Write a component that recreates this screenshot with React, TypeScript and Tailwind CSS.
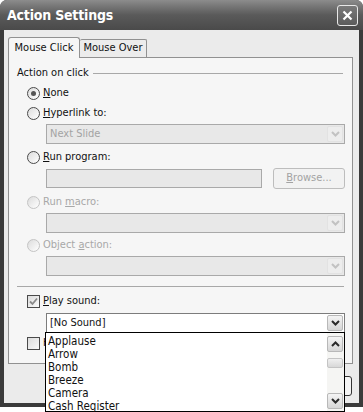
import React from 'react';

const FONT = '"DejaVu Sans Condensed", "DejaVu Sans", sans-serif';
const SOUNDS = ['Applause', 'Arrow', 'Bomb', 'Breeze', 'Camera', 'Cash Register'];

const Radio = ({ checked = false, disabled = false }: { checked?: boolean; disabled?: boolean }) => (
  <span
    className={`flex h-[13px] w-[13px] items-center justify-center rounded-full border bg-gradient-to-br from-[#dcdcdc] to-[#ffffff] ${
      disabled ? 'border-[#c4c4c4]' : 'border-[#4a4a4a]'
    }`}
  >
    {checked && <span className="h-[5px] w-[5px] rounded-full bg-[#555]" />}
  </span>
);

const Check = ({ checked = false }: { checked?: boolean }) => (
  <span className="flex h-[13px] w-[13px] items-center justify-center border border-[#4a4a4a] bg-gradient-to-br from-[#dcdcdc] to-[#fafafa]">
    {checked && (
      <svg width="9" height="9" viewBox="0 0 9 9">
        <path d="M1 4.5 L3.5 7 L8 1.5" fill="none" stroke="#8a8a8a" strokeWidth="1.8" />
      </svg>
    )}
  </span>
);

const Chevron = ({ up = false, color = '#333' }: { up?: boolean; color?: string }) => (
  <svg width="9" height="6" viewBox="0 0 9 6">
    <path d={up ? 'M1 5 L4.5 1.5 L8 5' : 'M1 1 L4.5 4.5 L8 1'} fill="none" stroke={color} strokeWidth="2" />
  </svg>
);

const ArrowBtn = ({ disabled = false, up = false, className = '' }: { disabled?: boolean; up?: boolean; className?: string }) => (
  <span
    className={`flex h-[16px] w-[16px] items-center justify-center rounded-[2px] border ${
      disabled ? 'border-[#e2e2e2] bg-[#ededed]' : 'border-[#b8b8b8] bg-gradient-to-b from-[#f4f4f4] to-[#d6d6d6]'
    } ${className}`}
  >
    <Chevron up={up} color={disabled ? '#c2c2c2' : '#2a2a2a'} />
  </span>
);

const Combo = ({ text = '', disabled = false }: { text?: string; disabled?: boolean }) => (
  <div
    className={`ml-[37px] flex h-[20px] w-[299px] items-center justify-between border pl-[3px] pr-[1px] ${
      disabled ? 'border-[#a9a9a9] bg-[#e8e8e8] text-[#a3a3a3]' : 'border-[#7c7c7c] bg-white text-[#111]'
    }`}
  >
    <span>{text}</span>
    <ArrowBtn disabled={disabled} />
  </div>
);

const OptionRow = ({
  label,
  ul,
  rest,
  checked,
  disabled,
  className = '',
}: {
  label: string;
  ul: string;
  rest: string;
  checked?: boolean;
  disabled?: boolean;
  className?: string;
}) => (
  <div className={`flex h-[16px] items-center gap-[3px] pl-[18px] ${disabled ? 'text-[#a8a8a8]' : 'text-[#111]'} ${className}`}>
    <Radio checked={checked} disabled={disabled} />
    <span>
      {label}
      <span className="underline">{ul}</span>
      {rest}
    </span>
  </div>
);

export default function App() {
  return (
    <div className="relative h-[412px] w-[363px] overflow-hidden bg-white text-[11px]" style={{ fontFamily: FONT }}>
      <div className="flex h-[407px] flex-col rounded-t-[7px] bg-[#3b3b3b]">
        {/* title bar */}
        <div className="flex h-[30px] shrink-0 items-center justify-between rounded-t-[7px] bg-gradient-to-b from-[#8c8c8c] via-[#5a5a5a] to-[#4a4a4a] pl-[7px] pr-[5px]">
          <span className="text-[14px] font-bold tracking-[-0.2px] text-white" style={{ fontFamily: '"Liberation Sans Narrow", "DejaVu Sans Condensed", sans-serif' }}>
            Action Settings
          </span>
          <span className="flex h-[21px] w-[21px] items-center justify-center rounded-[3px] border border-[#e8e8e8] bg-gradient-to-b from-[#7a7a7a] to-[#5c5c5c]">
            <svg width="11" height="11" viewBox="0 0 11 11">
              <path d="M1.5 1.5 L9.5 9.5 M9.5 1.5 L1.5 9.5" stroke="white" strokeWidth="2.2" />
            </svg>
          </span>
        </div>

        {/* body */}
        <div className="mx-[4px] mb-[4px] flex flex-1 flex-col bg-[#ebebeb] pl-[4px] pr-[6px] pt-[7px]">
          <div className="flex items-end">
            <div className="relative z-10 -mb-px flex h-[21px] w-[72px] items-center justify-center rounded-t-[3px] border border-b-0 border-[#919191] bg-[#f6f6f6] text-[#111]">
              Mouse Click
            </div>
            <div className="flex h-[18px] w-[67px] items-center justify-center rounded-t-[2px] border border-b-0 border-l-0 border-[#919191] bg-[#ececec] text-[#111]">
              Mouse Over
            </div>
          </div>

          <div className="flex h-[307px] flex-col border border-[#919191] bg-[#f6f6f6] pt-[7px]">
            <div className="flex h-[16px] items-center pl-[8px] pr-[9px] text-[#111]">
              <span>Action on click</span>
              <span className="ml-[4px] h-px flex-1 bg-[#a8a8a8]" />
            </div>

            <OptionRow label="" ul="N" rest="one" checked className="mt-[4px]" />
            <OptionRow label="" ul="H" rest="yperlink to:" className="mt-[4px]" />
            <div className="mt-[3px]">
              <Combo text="Next Slide" disabled />
            </div>
            <OptionRow label="" ul="R" rest="un program:" className="mt-[5px]" />
            <div className="mt-[3px] flex items-center">
              <div className="ml-[37px] h-[19px] w-[216px] border border-[#a9a9a9] bg-[#e8e8e8]" />
              <div className="ml-[11px] flex h-[21px] w-[72px] items-center justify-center rounded-[3px] border border-[#bdbdbd] bg-[#f2f2f2] text-[#a3a3a3]">
                <span>
                  <span className="underline">B</span>rowse...
                </span>
              </div>
            </div>
            <OptionRow label="Run " ul="m" rest="acro:" disabled className="mt-[5px]" />
            <div className="mt-[3px]">
              <Combo disabled />
            </div>
            <OptionRow label="Object " ul="a" rest="ction:" disabled className="mt-[4px]" />
            <div className="mt-[3px]">
              <Combo disabled />
            </div>

            <div className="mx-[8px] mt-[10px] h-px bg-[#a8a8a8]" />

            <div className="mt-[6px] flex h-[16px] items-center gap-[3px] pl-[18px] text-[#111]">
              <Check checked />
              <span>
                <span className="underline">P</span>lay sound:
              </span>
            </div>
            <div className="mt-[4px]">
              <Combo text="[No Sound]" />
            </div>
            <div className="mt-[2px] flex h-[16px] items-center gap-[3px] pl-[18px] text-[#111]">
              <Check />
              <span>Highlight click</span>
            </div>
          </div>

          <div className="mt-[12px] flex justify-end gap-[3px] pr-[1px]">
            <div className="flex h-[20px] w-[75px] items-center justify-center rounded-[3px] border border-[#333] bg-[#f4f4f4]">OK</div>
            <div className="flex h-[20px] w-[75px] items-center justify-center rounded-[3px] border border-[#333] bg-[#f4f4f4]">Cancel</div>
          </div>
        </div>
      </div>

      {/* open drop-down list */}
      <div className="absolute left-[45px] top-[332px] flex h-[80px] w-[300px] border border-black bg-white text-[11.5px] text-[#111]">
        <div className="flex flex-1 flex-col pl-[2px] pt-[2px] leading-[13px]">
          {SOUNDS.map((s) => (
            <span key={s} className="h-[13px]">{s}</span>
          ))}
        </div>
        <div className="flex w-[17px] flex-col bg-[#f5f5f3] pt-[3px] pb-[2px]">
          <ArrowBtn up />
          <span className="mt-[6px] h-[10px] w-[16px] rounded-[2px] border border-[#c4c4c4] bg-gradient-to-b from-[#f0f0f0] to-[#d8d8d8]" />
          <span className="flex-1" />
          <ArrowBtn />
        </div>
      </div>
    </div>
  );
}
